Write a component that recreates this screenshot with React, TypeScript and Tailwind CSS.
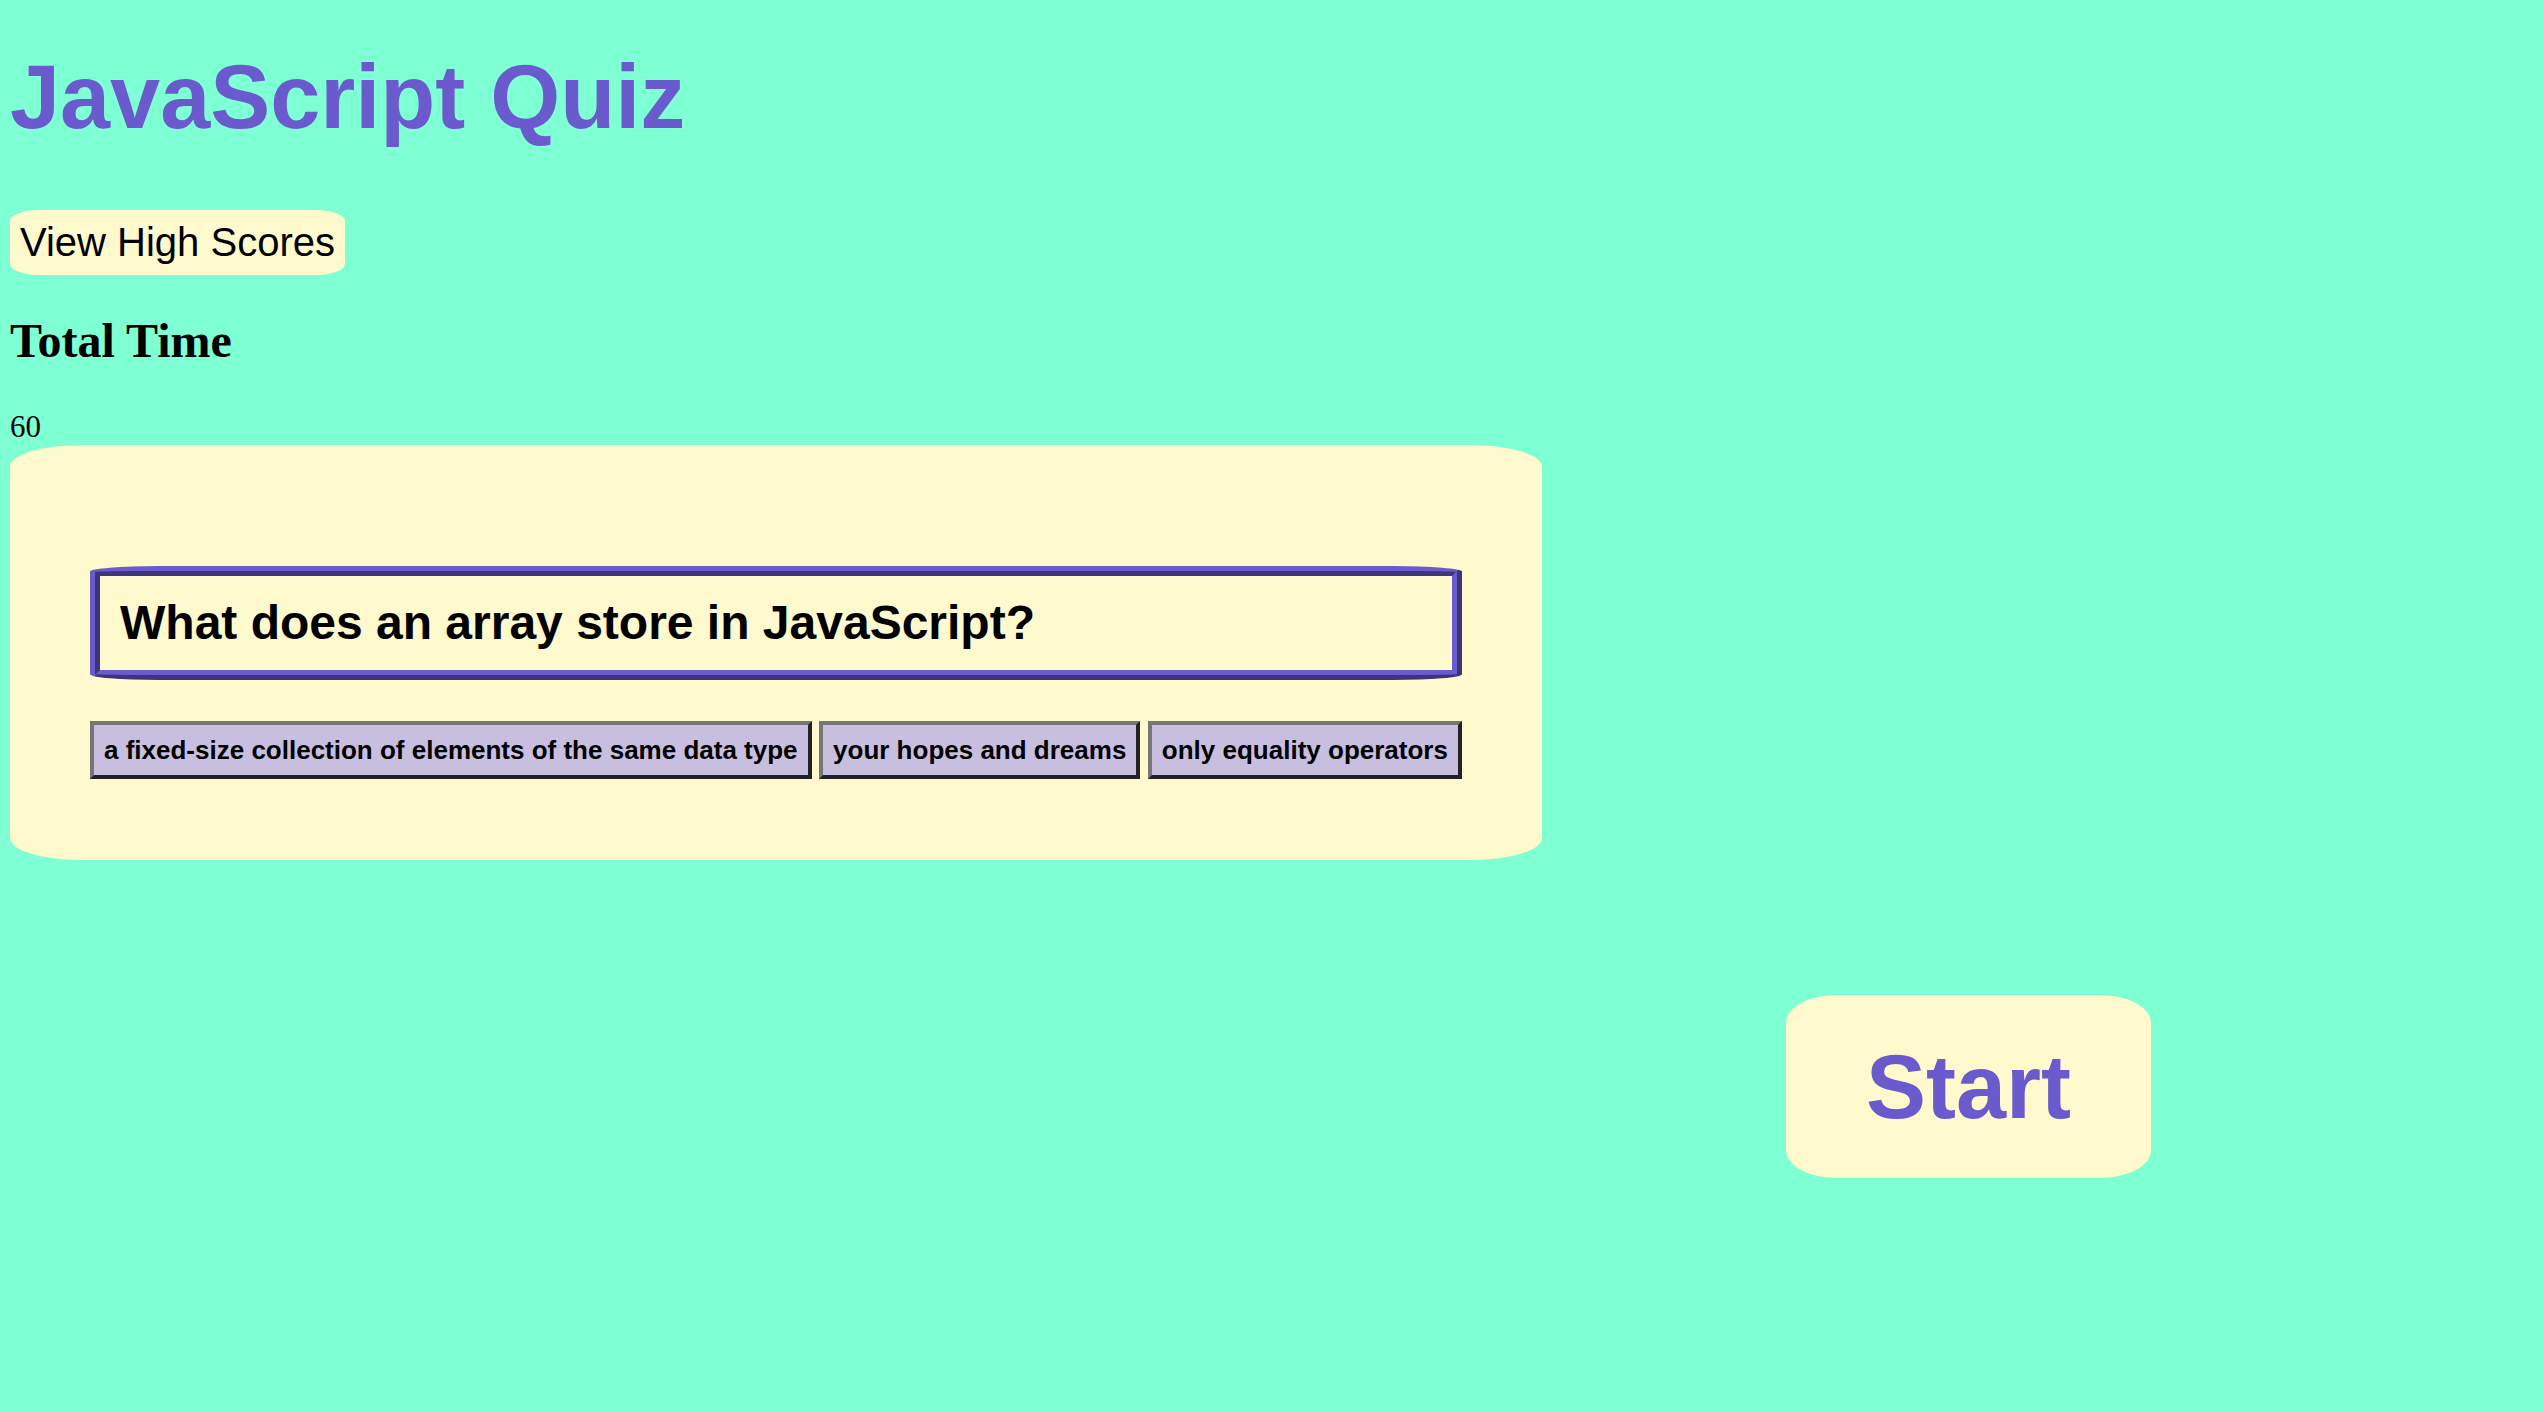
const answers = [
  "a fixed-size collection of elements of the same data type",
  "your hopes and dreams",
  "only equality operators",
];

export default function App() {
  return (
    <div className="min-h-screen bg-[#7fffd4] pl-[10px] pt-[47px] pb-[40px] flex flex-col items-start font-['Liberation_Sans',Arial,sans-serif] text-black">
      <h1 className="text-[90px] leading-[100px] font-bold text-[#6a5acd]">JavaScript Quiz</h1>
      <button className="mt-[63px] h-[65px] px-[10px] bg-[#fffacd] rounded-[30px/11px] text-[40px] leading-[65px] text-black">
        View High Scores
      </button>
      <h2 className="mt-[39px] font-['Liberation_Serif','Times_New_Roman',serif] text-[48px] leading-[53px] font-bold">
        Total Time
      </h2>
      <p className="mt-[43px] font-['Liberation_Serif','Times_New_Roman',serif] text-[31px] leading-[34px]">60</p>
      <div className="mt-[1px] bg-[#fffacd] rounded-[70px/22px] pt-[121px] px-[80px] pb-[81px] flex flex-col gap-[41px]">
        <div className="border-[10px] [border-style:ridge] border-[#6a5acd] rounded-[5%] px-[20px] py-[20px] text-[48px] leading-[54px] font-bold">
          What does an array store in JavaScript?
        </div>
        <div className="flex gap-[7.5px]">
          {answers.map((a) => (
            <button
              key={a}
              className="border-4 border-solid border-t-[#767676] border-l-[#767676] border-r-[#222222] border-b-[#222222] bg-[#c8bfe0] px-[10px] py-[10px] text-[26px] leading-[30px] font-bold text-black whitespace-nowrap"
            >
              {a}
            </button>
          ))}
        </div>
      </div>
      <button className="mt-[135px] ml-[1776px] w-[365px] h-[183px] rounded-[50px/28px] bg-[#fffacd] text-[90px] leading-[100px] font-bold text-[#6a5acd]">
        Start
      </button>
    </div>
  );
}
